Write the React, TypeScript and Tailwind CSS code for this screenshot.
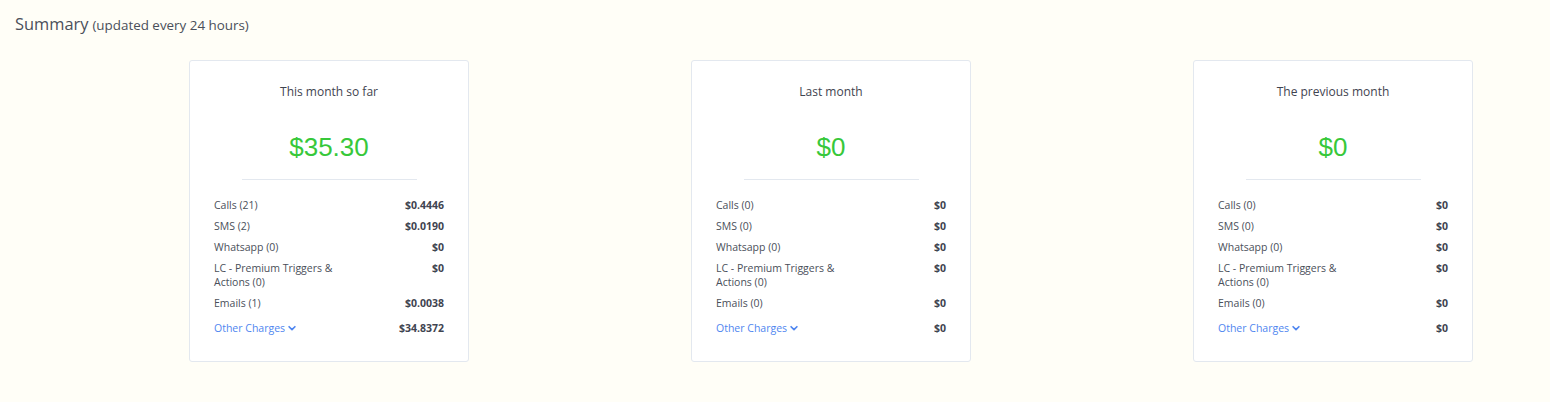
import React from 'react';

type Row = { label: string; count: number; value: string };

type Period = { title: string; total: string; rows: Row[]; other: string };

const periods: Period[] = [
  {
    title: 'This month so far',
    total: '$35.30',
    rows: [
      { label: 'Calls', count: 21, value: '$0.4446' },
      { label: 'SMS', count: 2, value: '$0.0190' },
      { label: 'Whatsapp', count: 0, value: '$0' },
      { label: 'LC - Premium Triggers & Actions', count: 0, value: '$0' },
      { label: 'Emails', count: 1, value: '$0.0038' },
    ],
    other: '$34.8372',
  },
  {
    title: 'Last month',
    total: '$0',
    rows: [
      { label: 'Calls', count: 0, value: '$0' },
      { label: 'SMS', count: 0, value: '$0' },
      { label: 'Whatsapp', count: 0, value: '$0' },
      { label: 'LC - Premium Triggers & Actions', count: 0, value: '$0' },
      { label: 'Emails', count: 0, value: '$0' },
    ],
    other: '$0',
  },
  {
    title: 'The previous month',
    total: '$0',
    rows: [
      { label: 'Calls', count: 0, value: '$0' },
      { label: 'SMS', count: 0, value: '$0' },
      { label: 'Whatsapp', count: 0, value: '$0' },
      { label: 'LC - Premium Triggers & Actions', count: 0, value: '$0' },
      { label: 'Emails', count: 0, value: '$0' },
    ],
    other: '$0',
  },
];

const SummaryCard: React.FC<{ period: Period }> = ({ period }) => {
  return (
    <div className="w-[280px] h-[302px] bg-white border border-[#e3e8ef] rounded-[3px] px-[24px] pt-[23px]">
      <div className="text-center text-[12px] leading-[16px] text-[#3f4450]">{period.title}</div>
      <div
        className="mt-[32px] text-center text-[26px] leading-[30px] text-[#37c83a]"
        style={{ fontFamily: '"Liberation Sans", Arial, sans-serif' }}
      >
        {period.total}
      </div>
      <div className="mx-auto mt-[17px] w-[175px] border-t border-[#e3e8ef]" />
      <div className="mt-[18px] flex flex-col gap-[7px] text-[10.5px] leading-[14px]">
        {period.rows.map((row) => (
          <div key={row.label} className="flex justify-between items-start">
            <p className="w-[140px] text-[#4a4f5a]">{`${row.label} (${row.count})`}</p>
            <span className="font-bold text-[#3f4450]">{row.value}</span>
          </div>
        ))}
        <div className="mt-[4px] flex justify-between items-center">
          <span className="flex items-center gap-[2px] text-[#4f86f0]">
            Other Charges
            <svg width="10" height="10" viewBox="0 0 24 24" fill="none" stroke="currentColor" strokeWidth="4" strokeLinecap="round" strokeLinejoin="round">
              <path d="M5 9l7 7 7-7" />
            </svg>
          </span>
          <span className="font-bold text-[#3f4450]">{period.other}</span>
        </div>
      </div>
    </div>
  );
};

const App: React.FC = () => {
  return (
    <div
      className="min-h-[402px] bg-[#fffef7] pt-[12px]"
      style={{ fontFamily: '"Open Sans", "Noto Sans", sans-serif' }}
    >
      <div className="pl-[15px] flex items-baseline gap-[4px] text-[#4a4f5a]">
        <span className="text-[16.4px]">Summary</span>
        <span className="text-[13.4px]">(updated every 24 hours)</span>
      </div>
      <div className="mt-[23px] pl-[189px] flex gap-[222px]">
        {periods.map((p) => (
          <SummaryCard key={p.title} period={p} />
        ))}
      </div>
    </div>
  );
};

export default App;
